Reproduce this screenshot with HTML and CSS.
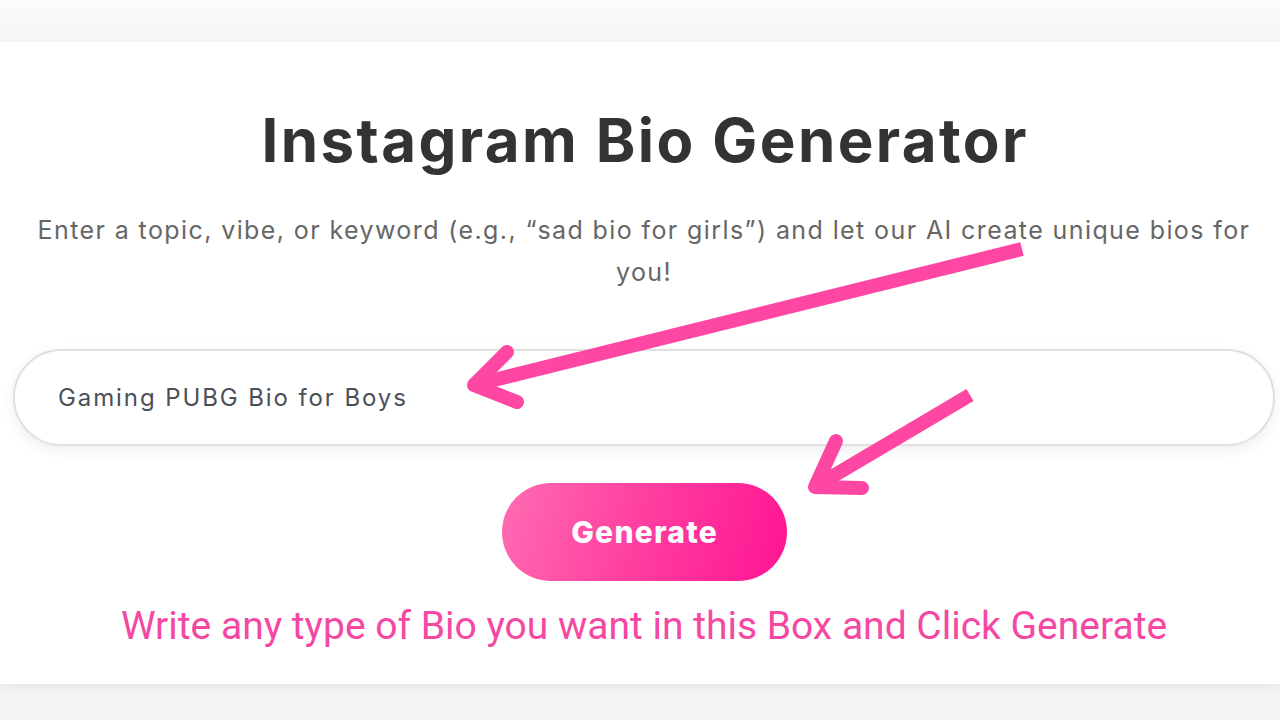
FILE: index.html
```html
<!DOCTYPE html>
<html lang="en">
<head>
<meta charset="utf-8">
<title>Instagram Bio Generator</title>
<link rel="stylesheet" href="styles.css">
</head>
<body>
  <div class="top-band"></div>
  <main class="card">
    <h1 class="title">Instagram Bio Generator</h1>
    <p class="subtitle">Enter a topic, vibe, or keyword (e.g., “sad bio for girls”) and let our AI create unique bios for you!</p>
    <input class="topic-input" type="text" value="Gaming PUBG Bio for Boys">
    <button class="generate-btn" type="button">Generate</button>
    <p class="caption">Write any type of Bio you want in this Box and Click Generate</p>
  </main>
  <svg class="annotations" width="1280" height="720" viewBox="0 0 1280 720" aria-hidden="true">
    <g fill="none" stroke="#fd47a2" stroke-width="14">
      <line x1="1022" y1="249" x2="478" y2="384" stroke-linecap="butt"/>
      <polyline points="507,352 474,385 517,402" stroke-linecap="round" stroke-linejoin="round"/>
      <line x1="970" y1="395" x2="818" y2="485" stroke-linecap="butt"/>
      <polyline points="836,441 815,487 862,488" stroke-linecap="round" stroke-linejoin="round"/>
    </g>
  </svg>
</body>
</html>
```
FILE: styles.css
```css
html, body {
  margin: 0;
  padding: 0;
}
body {
  width: 1280px;
  height: 720px;
  overflow: hidden;
  background: linear-gradient(#ececec, #f5f5f5 40px);
  font-family: Inter, "Noto Sans", sans-serif;
  position: relative;
}
.top-band {
  height: 42px;
  background: linear-gradient(#fbfbfb, #f5f5f5);
}
.card {
  background: #ffffff;
  height: 642px;
  box-sizing: border-box;
  padding: 57px 5px 0 13px;
  display: flex;
  flex-direction: column;
  align-items: center;
  text-align: center;
  box-shadow: 0 4px 10px rgba(0, 0, 0, 0.06);
}
.title {
  margin: 0;
  font-size: 60px;
  line-height: 82px;
  font-weight: 700;
  color: #333333;
  letter-spacing: 2.4px;
  padding-left: 2.4px;
}
.subtitle {
  margin: 28px 0 0;
  font-size: 25px;
  line-height: 42px;
  color: #666666;
  max-width: 1240px;
  letter-spacing: 1.4px;
}
.topic-input {
  margin-top: 56px;
  width: 100%;
  height: 97px;
  box-sizing: border-box;
  border: 2px solid #e0e0e0;
  border-radius: 50px;
  padding: 0 0 0 43px;
  font-family: inherit;
  font-size: 24px;
  letter-spacing: 1.9px;
  color: #4b5057;
  background: #ffffff;
  box-shadow: 0 4px 14px rgba(0, 0, 0, 0.07);
  outline: none;
}
.generate-btn {
  margin-top: 37px;
  width: 285px;
  height: 98px;
  border: none;
  border-radius: 49px;
  background: linear-gradient(105deg, #ff6cb2 0%, #ff3d9f 50%, #ff1493 100%);
  color: #ffffff;
  font-family: inherit;
  font-size: 30px;
  font-weight: 800;
  letter-spacing: 1.3px;
  padding: 0 0 0 1.3px;
  cursor: pointer;
}
.caption {
  margin: 22px 0 0;
  font-family: Roboto, "Noto Sans", sans-serif;
  font-size: 39px;
  line-height: 46px;
  color: #f448a2;
}
.annotations {
  position: absolute;
  left: 0;
  top: 0;
  pointer-events: none;
}
```
